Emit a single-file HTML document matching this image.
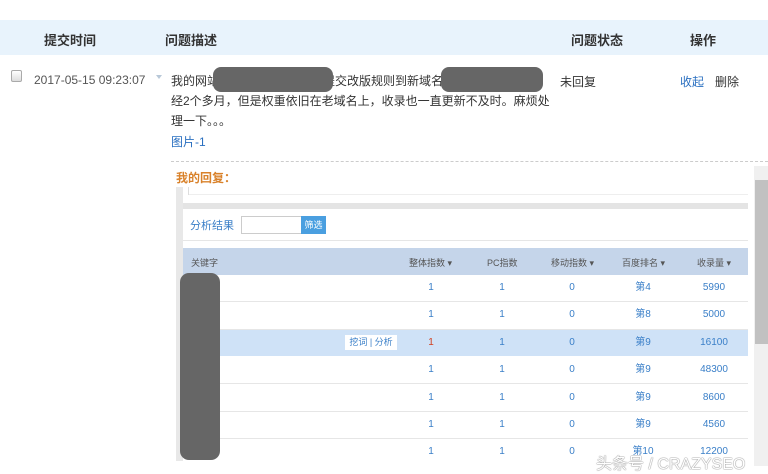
<!DOCTYPE html>
<html><head><meta charset="utf-8"><style>
*{margin:0;padding:0;box-sizing:border-box}
body{width:768px;height:474px;background:#fff;position:relative;overflow:hidden;font-family:"Liberation Sans","Noto Sans CJK SC",sans-serif;font-size:12px;color:#333}
.a{position:absolute;white-space:nowrap}
.b{font-weight:bold;font-size:13px;color:#333}
.blob{position:absolute;background:#666;border-radius:9px}
.th{position:absolute;font-size:9px;color:#555;top:256px}
.c{position:absolute;font-size:10px;line-height:12px;height:12px;color:#3a7fc8;width:60px;text-align:center}
.row{position:absolute;left:183px;width:565px;height:1px;background:#e6e6e6}
</style></head><body>
<div class="a" style="left:0;top:20px;width:768px;height:35px;background:#e8f3fc"></div>
<div class="a b" style="left:44px;top:30px">提交时间</div>
<div class="a b" style="left:165px;top:30px">问题描述</div>
<div class="a b" style="left:571px;top:30px">问题状态</div>
<div class="a b" style="left:690px;top:30px">操作</div>

<div class="a" style="left:11px;top:70px;width:11px;height:12px;border:1px solid #aaa;border-radius:2px;background:linear-gradient(#fff,#ddd)"></div>
<div class="a" style="left:34px;top:73px;color:#555">2017-05-15 09:23:07</div>
<div class="a" style="left:156px;top:75px;width:0;height:0;border-left:3px solid transparent;border-right:3px solid transparent;border-top:4px solid #b8c8d8"></div>
<div class="a" style="left:171px;top:71px;line-height:20px;white-space:normal;width:380px">我的网站XXXXXXXXXXXXX提交改版规则到新域名XXXXXXXXXXX已经2个多月，但是权重依旧在老域名上，收录也一直更新不及时。麻烦处理一下。。。</div>
<div class="blob" style="left:213px;top:67px;width:120px;height:25px;border-radius:8px"></div>
<div class="blob" style="left:441px;top:67px;width:102px;height:25px;border-radius:8px"></div>
<div class="a" style="left:171px;top:133px;color:#2a6fc0">图片-1</div>
<div class="a" style="left:560px;top:73px">未回复</div>
<div class="a" style="left:680px;top:73px;color:#2a6fc0">收起</div>
<div class="a" style="left:715px;top:73px">删除</div>

<div class="a" style="left:171px;top:161px;width:597px;border-top:1px dashed #ccc"></div>
<div class="a" style="left:176px;top:169px;color:#d9822b;font-weight:bold;font-size:12px">我的回复：</div>
<div class="a" style="left:176px;top:187px;width:7px;height:274px;background:#e8e8e8"></div>
<div class="a" style="left:188px;top:187px;width:1px;height:8px;background:#ddd"></div>
<div class="a" style="left:189px;top:194px;width:559px;height:1px;background:#eee"></div>
<div class="a" style="left:183px;top:203px;width:565px;height:6px;background:#e4e4e4"></div>
<div class="a" style="left:190px;top:217px;color:#3a7fc8;font-size:11px">分析结果</div>
<div class="a" style="left:241px;top:216px;width:61px;height:18px;border:1px solid #ccc"></div>
<div class="a" style="left:301px;top:216px;width:25px;height:18px;background:#4a9fe0;color:#fff;font-size:9px;text-align:center;line-height:18px">筛选</div>
<div class="a" style="left:183px;top:240px;width:565px;height:1px;background:#e6e6e6"></div>
<div class="a" style="left:183px;top:248px;width:565px;height:27px;background:#c5d5ea"></div>
<div class="th" style="left:191px">关键字</div>
<div class="th" style="left:409px">整体指数 ▾</div>
<div class="th" style="left:487px">PC指数</div>
<div class="th" style="left:551px">移动指数 ▾</div>
<div class="th" style="left:622px">百度排名 ▾</div>
<div class="th" style="left:697px">收录量 ▾</div>
<div class="a" style="left:183px;top:329px;width:565px;height:27px;background:#cfe2f7"></div>
<div class="a" style="left:345px;top:335px;width:52px;height:15px;background:#fff;font-size:9px;color:#3a7fc8;text-align:center;line-height:15px">挖词 | 分析</div>
<div class="row" style="top:301px"></div><div class="row" style="top:329px"></div><div class="row" style="top:383px"></div><div class="row" style="top:411px"></div><div class="row" style="top:438px"></div>
<div id="cells"></div>
<script>
var d=[["1","1","0","第4","5990"],["1","1","0","第8","5000"],["1","1","0","第9","16100"],["1","1","0","第9","48300"],["1","1","0","第9","8600"],["1","1","0","第9","4560"],["1","1","0","第10","12200"]];
var xs=[431,502,572,643,714],h="";
d.forEach(function(r,i){r.forEach(function(v,j){var col=(i==2&&j==0)?"#d04020":"#3a7fc8";h+='<div class="c" style="left:'+(xs[j]-30)+'px;top:'+(282+i*27.4)+'px;color:'+col+'">'+v+'</div>';});});
document.getElementById("cells").innerHTML=h;
</script>
<div class="blob" style="left:180px;top:273px;width:40px;height:187px"></div>
<div class="a" style="left:754px;top:166px;width:14px;height:300px;background:#f0f0f0"></div>
<div class="a" style="left:755px;top:180px;width:13px;height:164px;background:#c1c1c1"></div>
<div class="a" style="left:596px;top:450px;font-size:16px;color:#fff;text-shadow:0 0 1px #777,0 0 1px #777">头条号 / CRAZYSEO</div>
</body></html>
